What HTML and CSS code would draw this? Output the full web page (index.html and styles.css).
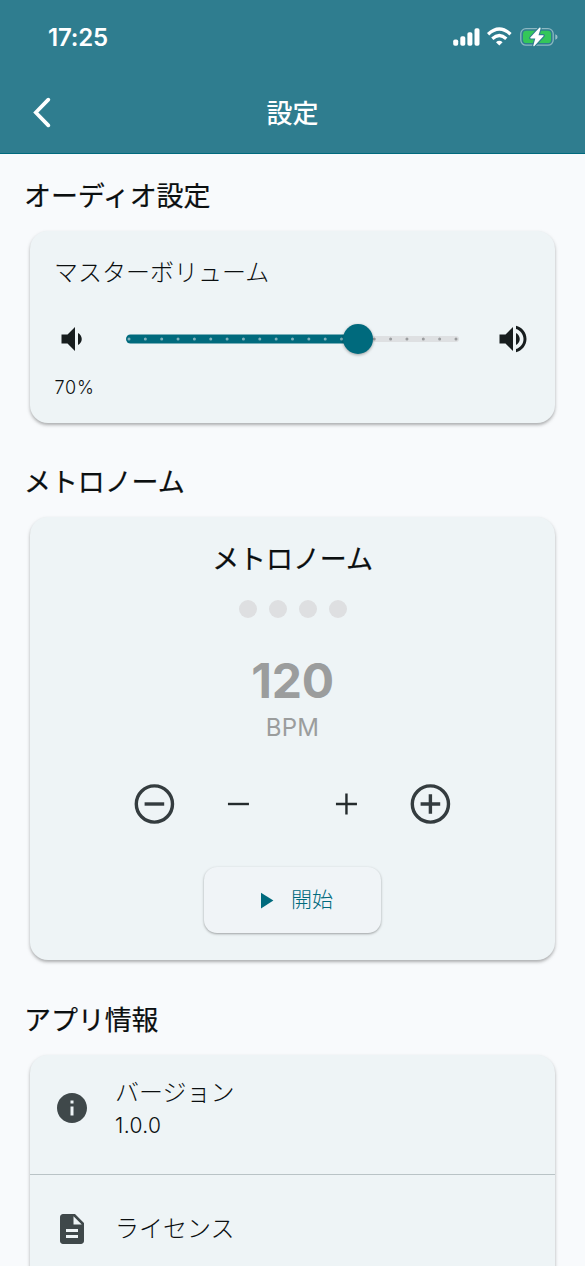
FILE: index.html
```html
<!DOCTYPE html>
<html lang="ja">
<head>
<meta charset="utf-8">
<title>設定</title>
<link rel="stylesheet" href="styles.css">
</head>
<body>
<header class="header">
  <div class="status">
    <span class="clock">17:25</span>
    <svg class="status-icons" width="106" height="22" viewBox="0 0 106 22">
      <g fill="#fff">
        <rect x="1.200" y="12.500" width="5" height="6.300" rx="1.800"/>
        <rect x="8.300" y="9.200" width="5" height="9.600" rx="1.800"/>
        <rect x="15.400" y="5.200" width="5" height="13.600" rx="1.800"/>
        <rect x="22.500" y="1.200" width="5" height="17.600" rx="1.800"/>
        <path d="M47.300 18.600L44 15.200Q47.300 12.400 50.600 15.200Z"/>
      </g>
      <g fill="none" stroke="#fff" stroke-width="3.300">
        <path d="M36.100 7.200Q47.300 -3 58.500 7.200"/>
        <path d="M40.300 11.700Q47.300 5.400 54.300 11.700"/>
      </g>
      <rect x="68.800" y="1.600" width="32.400" height="16.600" rx="5.200" fill="none" stroke="#fff" stroke-opacity=".45" stroke-width="1.300"/>
      <path d="M103.300 7.200Q105.600 8 105.600 10T103.300 12.800Z" fill="#fff" fill-opacity=".5"/>
      <rect x="71" y="3.700" width="28" height="12.400" rx="3.400" fill="#34c759"/>
      <path d="M87.300 .8L78.300 10.600Q77.900 11.400 78.800 11.400H83.300L81.300 18.600Q81.400 19.800 82.400 19L91.600 9Q92 8.200 91 8.200H86.500L88.600 1.500Q88.600 .2 87.300 .8Z" fill="#fff" stroke="#2f7d8f" stroke-width="2.200" paint-order="stroke"/>
    </svg>
  </div>
  <nav class="navbar">
    <svg class="back" width="22" height="32" viewBox="0 0 22 32"><path d="M18.300 3.600L5.800 16.500L18.300 29.400" fill="none" stroke="#fff" stroke-width="3.700" stroke-linecap="round" stroke-linejoin="miter"/></svg>
    <h1 class="title">設定</h1>
  </nav>
</header>
<main class="content">
  <h2 class="section">オーディオ設定</h2>
  <section class="card audio">
    <p class="label">マスターボリューム</p>
    <div class="volume">
      <svg width="36" height="36" viewBox="0 0 24 24" fill="#171d1e"><path d="M18.500 12c0-1.770-1.020-3.290-2.500-4.030v8.050c1.480-.730 2.500-2.250 2.500-4.020zM5 9v6h4l5 5V4L9 9H5z"/></svg>
      <svg class="slider" width="336" height="38" viewBox="0 0 336 38">
        <rect x="230" y="16" width="103" height="6" rx="3" fill="#dee0e2"/>
        <rect x="0" y="14.500" width="235" height="9" rx="4.500" fill="#006a7d"/>
        <path d="M3 19H232" fill="none" stroke="#7fb0ba" stroke-width="3" stroke-linecap="round" stroke-dasharray="0 16.350"/>
        <path d="M248.250 19H331" fill="none" stroke="#9b9d9f" stroke-width="3" stroke-linecap="round" stroke-dasharray="0 16.350"/>
        <circle class="thumb" cx="232" cy="19" r="15" fill="#006a7d"/>
      </svg>
      <svg width="36" height="36" viewBox="0 0 24 24" fill="#171d1e"><path d="M3 9v6h4l5 5V4L7 9H3zm13.500 3c0-1.770-1.020-3.290-2.500-4.030v8.050c1.480-.730 2.500-2.250 2.500-4.020zM14 3.230v2.060c2.890.860 5 3.540 5 6.710s-2.110 5.850-5 6.710v2.060c4.010-.910 7-4.490 7-8.770s-2.990-7.860-7-8.770z"/></svg>
    </div>
    <p class="percent">70%</p>
  </section>
  <h2 class="section">メトロノーム</h2>
  <section class="card metronome">
    <h3 class="metro-title">メトロノーム</h3>
    <div class="beats"><i></i><i></i><i></i><i></i></div>
    <div class="bpm">120</div>
    <div class="unit">BPM</div>
    <div class="steps">
      <svg width="48" height="48" viewBox="0 0 48 48" fill="none" stroke="#343c3f" stroke-width="3.400"><circle cx="24.400" cy="24" r="18.100"/><path d="M14.600 24H34.200"/></svg>
      <svg width="36" height="36" viewBox="0 0 24 24" fill="#242b2d"><path d="M19.300 12.800H5.300v-1.600h14z"/></svg>
      <svg width="36" height="36" viewBox="0 0 24 24" fill="#242b2d"><path d="M19.300 12.800h-6.200V19h-1.600v-6.200H5.300v-1.600h6.200V5h1.600v6.200H19.300z"/></svg>
      <svg width="48" height="48" viewBox="0 0 48 48" fill="none" stroke="#343c3f" stroke-width="3.400"><circle cx="24.400" cy="24" r="18.100"/><path d="M14.600 24H34.200M24.400 14.200V33.800"/></svg>
    </div>
    <button class="start"><svg width="27" height="27" viewBox="0 0 24 24" fill="#006a7d"><path d="M8 5v14l11-7z"/></svg><span>開始</span></button>
  </section>
  <h2 class="section">アプリ情報</h2>
  <section class="card info">
    <div class="row version">
      <svg width="36" height="36" viewBox="0 0 24 24" fill="#3f484a"><path d="M12 2C6.480 2 2 6.480 2 12s4.480 10 10 10 10-4.480 10-10S17.520 2 12 2zm1 15h-2v-6h2v6zm0-8h-2V7h2v2z"/></svg>
      <div><p class="label">バージョン</p><p class="number">1.0.0</p></div>
    </div>
    <div class="row license">
      <svg width="36" height="36" viewBox="0 0 24 24" fill="#3f484a"><path d="M14 2H6c-1.100 0-1.990.900-1.990 2L4 20c0 1.100.890 2 1.990 2H18c1.100 0 2-.900 2-2V8l-6-6zm2 16H8v-2h8v2zm0-4H8v-2h8v2zm-3-5V3.500L18.500 9H13z"/></svg>
      <p class="label">ライセンス</p>
    </div>
  </section>
</main>
</body>
</html>
```
FILE: styles.css
```css
* { box-sizing: border-box; margin: 0; padding: 0; }
body {
  width: 585px; height: 1266px; overflow: hidden;
  background: #f8fafc; color: #0b0f10;
  font-family: Inter, "Noto Sans CJK JP", sans-serif;
}
svg { display: block; flex: none; }
.header { height: 154px; background: #2f7d8f; border-bottom: 1px solid #006a7d; color: #fff; }
.status { height: 70px; padding: 27px 27px 0 48px; display: flex; justify-content: space-between; align-items: flex-start; }
.clock { font-size: 24px; line-height: 22px; font-weight: 600; letter-spacing: -.2px; }
.navbar { height: 84px; display: grid; grid-template-columns: 66px 1fr 66px; align-items: center; }
.back { margin-left: 30px; }
.title { padding-top: 3px; text-align: center; font-size: 26px; line-height: 36px; font-weight: 500; }
.content { padding: 0 30px; }
.section { height: 77px; margin-left: -6px; padding-top: 24px; font-size: 27px; line-height: 38px; font-weight: 400; letter-spacing: -.1px; -webkit-text-stroke: .2px; }
.card { background: #eef4f6; border-radius: 18px; box-shadow: 0 2px 3px rgba(0,0,0,.24), 0 2px 5px rgba(0,0,0,.09); }
.label { font-size: 24px; line-height: 36px; font-weight: 300; }
.audio { height: 192px; padding: 24px; margin-bottom: 17px; }
.volume { height: 60px; margin-top: 18px; display: flex; align-items: center; justify-content: space-between; }
.slider { overflow: visible; margin-left: 2px; }
.thumb { filter: drop-shadow(0 1px 1.500px rgba(0,0,0,.35)); }
.percent { margin-top: 6px; padding-left: .5px; font-size: 18px; line-height: 26px; font-weight: 300; letter-spacing: .8px; }
.metronome { height: 443px; margin-bottom: 18px; padding-top: 22px; display: flex; flex-direction: column; align-items: center; }
.metro-title { font-size: 27px; line-height: 42px; font-weight: 400; letter-spacing: -.1px; -webkit-text-stroke: .2px; }
.beats { display: flex; gap: 12px; margin-top: 19px; }
.beats i { width: 18px; height: 18px; border-radius: 50%; background: #dedfe1; }
.bpm { margin-top: 34px; font-size: 48px; line-height: 58px; font-weight: 700; letter-spacing: -.2px; color: #9b9d9d; }
.unit { margin-top: 1px; font-size: 24px; line-height: 34px; letter-spacing: .3px; color: #9b9d9d; }
.steps { width: 324px; height: 60px; margin: 29px 1px 0 0; display: flex; align-items: center; }
.steps svg:nth-child(2) { margin-left: 42px; }
.steps svg:nth-child(3) { margin-left: 72px; }
.steps svg:nth-child(4) { margin-left: 42px; }
.start { width: 177px; height: 66px; margin-top: 33px; border: 0; border-radius: 13px; background: #f0f4f7; color: #006a7d; box-shadow: 0 1px 2.500px rgba(0,0,0,.35); display: flex; justify-content: center; align-items: center; gap: 12px; font: 300 21px/30px Inter, "Noto Sans CJK JP", sans-serif; }
.info { height: 260px; }
.row { display: flex; align-items: center; gap: 25px; padding-left: 24px; height: 108px; }
.version { height: 120px; padding-bottom: 13px; border-bottom: 1.500px solid #b9c3c6; }
.number { font-size: 21px; line-height: 30px; font-weight: 300; letter-spacing: .4px; }
```
